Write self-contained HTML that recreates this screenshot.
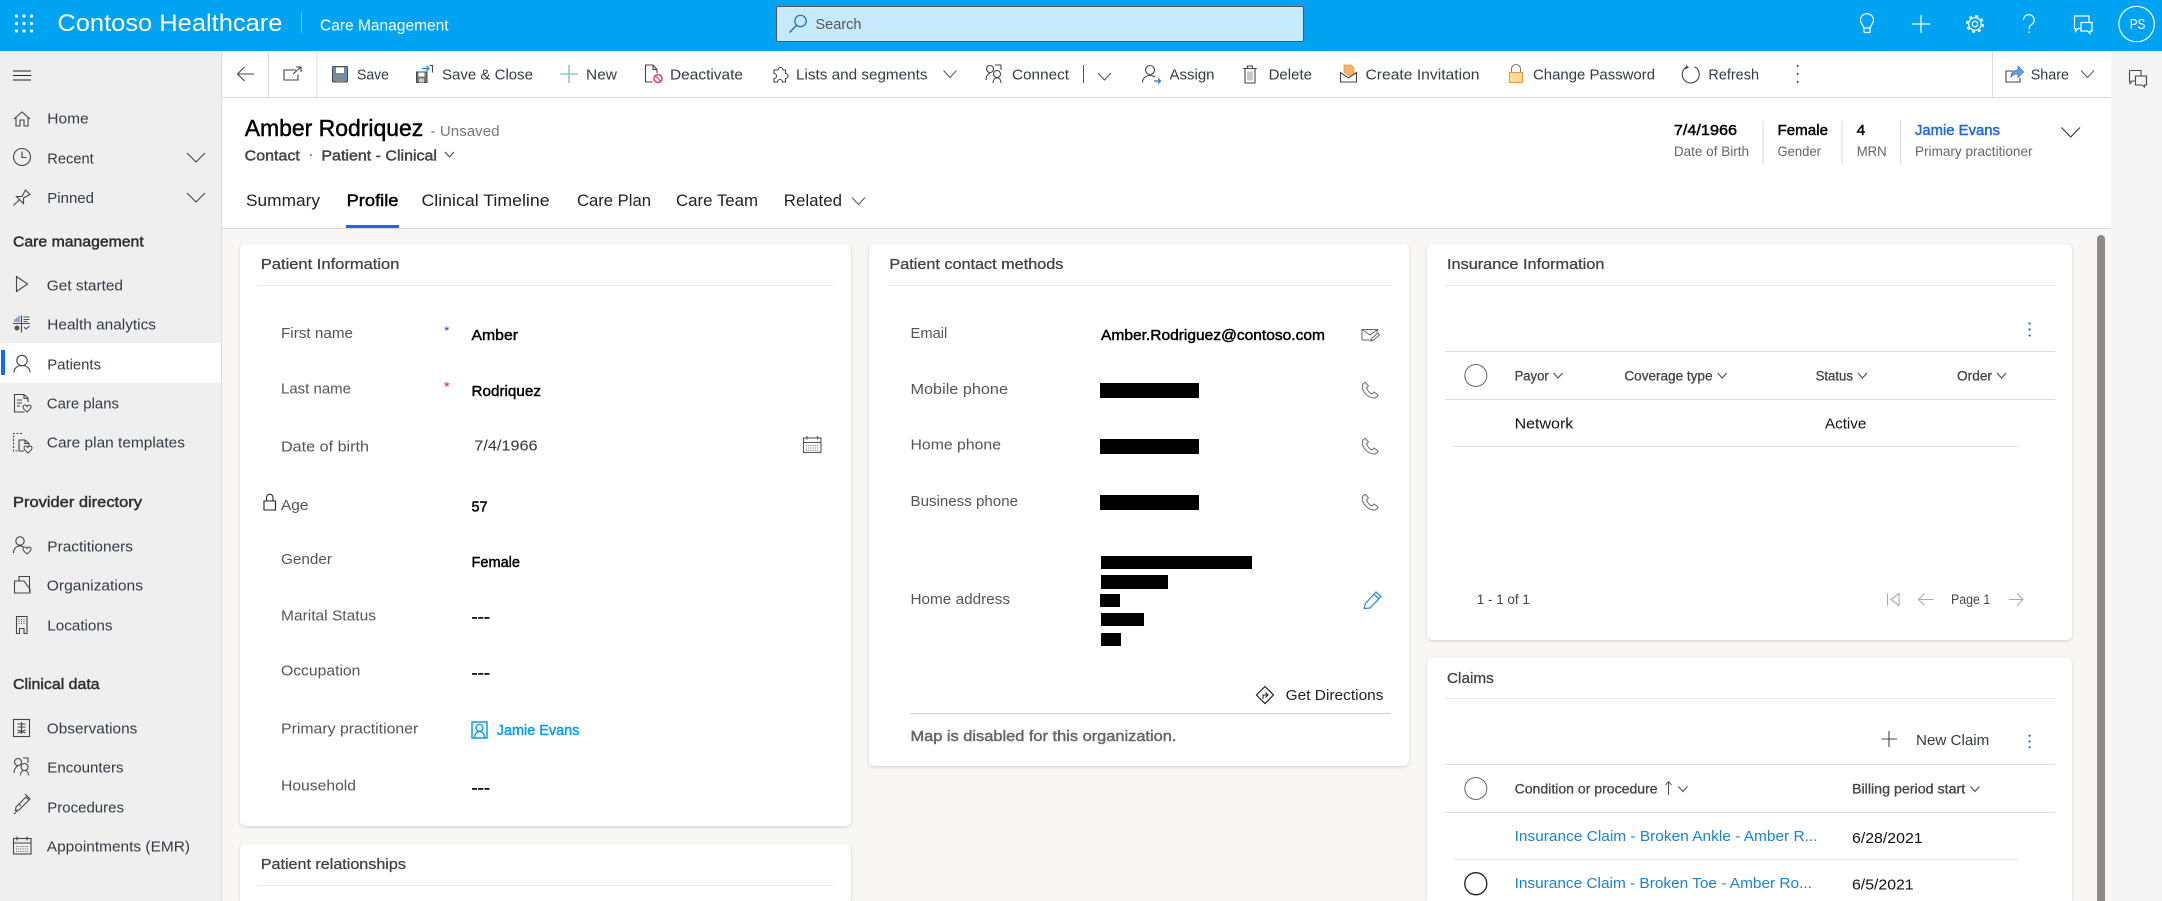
<!DOCTYPE html>
<html lang="en">
<head>
<meta charset="utf-8">
<title>Contoso Healthcare - Care Management</title>
<style>
html,body{margin:0;padding:0;width:2162px;height:901px;overflow:hidden;background:#f8f7f6}
#root{position:relative;width:2162px;height:901px;overflow:hidden;background:#f8f7f6}
.a{position:absolute;box-sizing:border-box}
.card{background:#fff;border-radius:5px;box-shadow:0 1px 3px rgba(0,0,0,.16)}
.open{border-radius:5px 5px 0 0}
svg{position:absolute;left:0;top:0;font-family:"Liberation Sans",sans-serif}
text{fill:currentColor;transform:translateY(-.8px)}
.n{font-size:15px;color:#3a3a3a}
.g{font-size:15px;color:#2e2e2e;stroke:currentColor;stroke-width:.45}
.c{font-size:15px;color:#333b45;transform:translateY(-.4px)}
.l{font-size:15px;color:#555;transform:translateY(-.5px)}
.v{font-size:15px;color:#000;stroke:currentColor;stroke-width:.45}
.t{font-size:17px;color:#222}
.h{font-size:13.5px;color:#444;stroke:currentColor;stroke-width:.3}
.d{font-size:15px;color:#111;transform:translateY(-.4px)}
.z{transform:none}
.i{fill:none;stroke:#444;stroke-width:1.1}
.w{fill:none;stroke:#fff;stroke-width:1.2}
</style>
</head>
<body>
<div id="root">
<div class="a" style="left:0;top:0;width:2162px;height:51px;background:#00a2f2"></div>
<div class="a" style="left:776px;top:6px;width:528px;height:36px;background:#c7e9fc;border:1px solid #555;border-radius:2px"></div>
<div class="a" style="left:0;top:51px;width:222px;height:850px;background:#efefef;border-right:1px solid #dcdcdc"></div>
<div class="a" style="left:0;top:343px;width:221px;height:40px;background:#fff"></div>
<div class="a" style="left:1px;top:350px;width:4px;height:25px;background:#0f6cf0"></div>
<div class="a" style="left:222px;top:51px;width:1889px;height:47px;background:#fff;border-bottom:1px solid #d4d4d4"></div>
<div class="a" style="left:222px;top:98px;width:1889px;height:131px;background:#fff;border-bottom:1px solid #d8d8d8"></div>
<div class="a" style="left:346px;top:225px;width:53px;height:3px;background:#2266e3"></div>
<div class="a" style="left:2111px;top:51px;width:51px;height:850px;background:#f5f5f5"></div>
<div class="a" style="left:2097px;top:235px;width:8px;height:666px;background:#8a8a8a;border-radius:4px 4px 0 0"></div>
<div class="a card" style="left:240px;top:244px;width:611px;height:582px"></div>
<div class="a card open" style="left:240px;top:844px;width:611px;height:57px"></div>
<div class="a card" style="left:869px;top:244px;width:540px;height:522px"></div>
<div class="a card" style="left:1427px;top:244px;width:645px;height:396px"></div>
<div class="a card open" style="left:1427px;top:658px;width:645px;height:243px"></div>

<svg width="2162" height="901" viewBox="0 0 2162 901" xmlns="http://www.w3.org/2000/svg">
<defs>
<path id="chev" d="M0 0l4.500 5 4.500-5" fill="none" stroke="#555" stroke-width="1.200"/>
<path id="chevL" d="M0 0l6.500 7 6.500-7" fill="none" stroke="#555" stroke-width="1"/>
<path id="phone" d="M4 .5C1.500 1 .5 3 1 6c1 5 6 9.500 11 10 2.500.2 4-1 4.500-3l-4-3-2 2c-2-.5-5-4-5.500-6l2-2z" fill="none" stroke="#666" stroke-width="1"/>
<path id="heart" d="M0 1.500C-1-.5-4-.5-4 2c0 2 2.500 3.500 4 5 1.500-1.500 4-3 4-5 0-2.500-3-2.500-4-.5z" fill="#efefef" stroke="#444" stroke-width="1"/>
</defs>

<!-- Top bar -->
<g fill="#fff">
<circle cx="16.500" cy="16" r="1.600"/><circle cx="24" cy="16" r="1.600"/><circle cx="31.500" cy="16" r="1.600"/>
<circle cx="16.500" cy="23.500" r="1.600"/><circle cx="24" cy="23.500" r="1.600"/><circle cx="31.500" cy="23.500" r="1.600"/>
<circle cx="16.500" cy="31" r="1.600"/><circle cx="24" cy="31" r="1.600"/><circle cx="31.500" cy="31" r="1.600"/>
</g>
<g style="color:#fff">
<text x="57.400" y="31.700" font-size="24" textLength="225" lengthAdjust="spacingAndGlyphs">Contoso Healthcare</text>
<text x="320" y="31.500" font-size="15.500" textLength="128.600" lengthAdjust="spacingAndGlyphs">Care Management</text>
<text x="2129.700" y="30" font-size="14.500" textLength="15.600" lengthAdjust="spacingAndGlyphs">PS</text>
</g>
<path d="M301.500 12v21" stroke="#6cc6f5" stroke-width="1"/>
<circle cx="800.500" cy="21" r="5.700" fill="none" stroke="#1a6fb5" stroke-width="1.200"/>
<path d="M796.500 25.500L789.500 32.500" stroke="#1a6fb5" stroke-width="1.400"/>
<text x="815.500" y="30" font-size="15" style="color:#555" textLength="46" lengthAdjust="spacingAndGlyphs">Search</text>
<path class="w" d="M1863.800 28c0-3-3.300-4-3.300-7.800a6.500 6.500 0 0 1 13 0c0 3.800-3.300 4.800-3.300 7.800zM1864 28v3.500a1 1 0 0 0 1 1h4a1 1 0 0 0 1-1V28"/>
<path class="w" d="M1921 15v18M1912 24h18"/>
<circle class="w" cx="1975" cy="24" r="6.300"/><circle class="w" cx="1975" cy="24" r="2.800"/>
<circle cx="1975" cy="24" r="8" fill="none" stroke="#fff" stroke-width="2" stroke-dasharray="3 3.280"/>
<path class="w" d="M2023.500 20a5.300 5.300 0 1 1 8.500 4.200c-2 1.500-3 2.500-3 5"/><circle cx="2029" cy="32.300" r=".9" fill="#fff"/>
<path class="w" d="M2081 28.500h-3l-2.500 3v-3h-1V16h14.500v6.500M2081 22.500h11V31h-2v2.500l-2.500-2.500H2081z"/>
<circle class="w" cx="2136.600" cy="24" r="17.700"/>

<!-- Sidebar -->
<path d="M13 71h18M13 75.500h18M13 80h18" stroke="#222" stroke-width="1.100"/>
<g>
<text class="c" x="47.300" y="124" textLength="41.300" lengthAdjust="spacingAndGlyphs">Home</text>
<text class="c" x="47.300" y="164" textLength="46.400" lengthAdjust="spacingAndGlyphs">Recent</text>
<text class="c" x="47.300" y="203.500" textLength="46.700" lengthAdjust="spacingAndGlyphs">Pinned</text>
<text class="g" x="13" y="247.300" textLength="130.700" lengthAdjust="spacingAndGlyphs">Care management</text>
<text class="c" x="46.800" y="291" textLength="76.200" lengthAdjust="spacingAndGlyphs">Get started</text>
<text class="c" x="47.300" y="330" textLength="108.700" lengthAdjust="spacingAndGlyphs">Health analytics</text>
<text class="c" x="47.300" y="370" textLength="53.700" lengthAdjust="spacingAndGlyphs">Patients</text>
<text class="c" x="46.800" y="409" textLength="72.200" lengthAdjust="spacingAndGlyphs">Care plans</text>
<text class="c" x="46.800" y="448" textLength="138.200" lengthAdjust="spacingAndGlyphs">Care plan templates</text>
<text class="g" x="13" y="508" textLength="129" lengthAdjust="spacingAndGlyphs">Provider directory</text>
<text class="c" x="47.300" y="552" textLength="85.700" lengthAdjust="spacingAndGlyphs">Practitioners</text>
<text class="c" x="46.800" y="591" textLength="96.200" lengthAdjust="spacingAndGlyphs">Organizations</text>
<text class="c" x="47.300" y="631" textLength="65.200" lengthAdjust="spacingAndGlyphs">Locations</text>
<text class="g" x="13" y="690" textLength="86.600" lengthAdjust="spacingAndGlyphs">Clinical data</text>
<text class="c" x="46.800" y="734" textLength="90.500" lengthAdjust="spacingAndGlyphs">Observations</text>
<text class="c" x="47.300" y="773" textLength="76.200" lengthAdjust="spacingAndGlyphs">Encounters</text>
<text class="c" x="47.300" y="813" textLength="76.700" lengthAdjust="spacingAndGlyphs">Procedures</text>
<text class="c" x="46.800" y="852" textLength="143.200" lengthAdjust="spacingAndGlyphs">Appointments (EMR)</text>
</g>
<path class="i" d="M14 119l8-7 8 7M16 117.500V126h4v-6h4v6h4v-8.500"/>
<circle class="i" cx="22" cy="157" r="8.500"/><path class="i" d="M22 151.500v6h4.500"/>
<path d="M187 153l9 9 9-9M187 193l9 9 9-9" fill="none" stroke="#444" stroke-width="1.100"/>
<path class="i" d="M13.500 205.500l6-6M16.500 196.500h5.500l3.500-6.500 4.500 4.500-6.500 3.500v5.500z"/>
<path class="i" d="M16.500 276.500L27.500 284l-11 7.500z"/>
<path class="i" d="M13 323.500h17M21.500 315.500v17"/>
<path d="M15 322v-3M17 322v-4.500M19 322v-6" stroke="#3b6fb5" stroke-width="1.100"/>
<path d="M23.500 317h6M23.500 319.500h6M23.500 321.500h4" stroke="#555" stroke-width=".9"/>
<circle cx="17" cy="328" r="2.500" fill="#555"/>
<path d="M24 327l2 2 3.500-3" fill="none" stroke="#446" stroke-width="1.100"/>
<circle class="i" cx="22" cy="360.500" r="5.200"/><path class="i" d="M14 372.500c0-4.500 3.500-7 8-7s8 2.500 8 7"/>
<path class="i" d="M28 402v-4l-4-3.500h-9.500V412h10M24 394.500v4h4M17 400h5M17 403h5M17 406h3"/>
<use href="#heart" x="27" y="405"/>
<path class="i" stroke-dasharray="2 1.500" d="M22 433.500h-8.500V451H18"/><path class="i" d="M19 451v-11h6l4 3.500v3M25 440v3.500h4M19 451h5"/>
<use href="#heart" x="28" y="446"/>
<circle class="i" cx="20" cy="541" r="4.200"/><path class="i" d="M13.500 553c0-4 2.500-7 6.500-7 1.500 0 2.500.3 3.500 1"/>
<use href="#heart" x="27" y="547"/>
<path class="i" d="M14.500 581H24l6 8v4H14.500zM19 581v-4.500h10.500V592"/>
<path class="i" d="M16.500 616.500h10.500v17h-3v-5h-4.500v5h-3z"/>
<path d="M19 619v6M21.500 619v6M24 619v6" stroke="#555" stroke-width="1" stroke-dasharray="1 1"/>
<rect class="i" x="13.500" y="719.500" width="16" height="17"/>
<path class="i" d="M21.500 722v12M17.500 724h8M17.500 727h8M17.500 730l8 3M25.500 730l-8 3"/>
<circle class="i" cx="18" cy="762" r="3.500"/><path class="i" d="M14 773c0-4 1.500-6 4-7M23 758h5v5"/><circle class="i" cx="24.500" cy="767" r="3.500"/><path class="i" d="M20.500 775.500c0-3 1.500-5 4-5s4 2 4 5"/>
<path class="i" d="M14 814l4-4M16 807l10-10 3 3-10 10-3.500.5zM25 794l5.500 5.500M19 804l2 2"/>
<rect class="i" x="13.500" y="838.500" width="17.500" height="15.500"/><path class="i" d="M13.500 843h17.500M17 836.500v4M27 836.500v4"/>
<path d="M16 846.500h12M16 849h12M16 851.500h12" stroke="#666" stroke-width="1" stroke-dasharray="1 1.200"/>

<!-- Command bar -->
<path d="M268.500 51v46M317 51v46M1992.500 51v46" stroke="#dcdcdc" stroke-width="1"/>
<path class="i" d="M254 74h-16.500M244.500 67l-7 7 7 7"/>
<path class="i" d="M296 70h-12v10h14v-5.500M293 74l8-7M296 67h5v5"/>
<g>
<text class="c" x="357" y="80" textLength="32" lengthAdjust="spacingAndGlyphs">Save</text>
<text class="c" x="442" y="80" textLength="91" lengthAdjust="spacingAndGlyphs">Save &amp; Close</text>
<text class="c" x="586" y="80" textLength="31" lengthAdjust="spacingAndGlyphs">New</text>
<text class="c" x="670" y="80" textLength="73" lengthAdjust="spacingAndGlyphs">Deactivate</text>
<text class="c" x="796" y="80" textLength="131.500" lengthAdjust="spacingAndGlyphs">Lists and segments</text>
<text class="c" x="1012" y="80" textLength="57" lengthAdjust="spacingAndGlyphs">Connect</text>
<text class="c" x="1169.500" y="80" textLength="45" lengthAdjust="spacingAndGlyphs">Assign</text>
<text class="c" x="1268.600" y="80" textLength="43.400" lengthAdjust="spacingAndGlyphs">Delete</text>
<text class="c" x="1365.500" y="80" textLength="114" lengthAdjust="spacingAndGlyphs">Create Invitation</text>
<text class="c" x="1533" y="80" textLength="122" lengthAdjust="spacingAndGlyphs">Change Password</text>
<text class="c" x="1708.400" y="80" textLength="50.600" lengthAdjust="spacingAndGlyphs">Refresh</text>
<text class="c" x="2030.700" y="80" textLength="38.300" lengthAdjust="spacingAndGlyphs">Share</text>
</g>
<rect x="332.500" y="66.500" width="15" height="15.500" rx="1" fill="#6a8fb5" stroke="#444" stroke-width="1"/>
<rect x="335.500" y="67" width="9" height="6.500" fill="#fff" stroke="#555" stroke-width=".6"/><rect x="336" y="76" width="8" height="6" fill="#888"/>
<rect x="416.500" y="72" width="10.500" height="10.500" fill="#777" stroke="#444"/><rect x="418.500" y="72.500" width="6" height="4" fill="#fff"/><rect x="419" y="78.500" width="5" height="4" fill="#ccc"/>
<path d="M422 68.500h7M426.500 66l2.500 2.500-2.500 2.500" fill="none" stroke="#2b88d8" stroke-width="1.300"/><path class="i" d="M429.500 65.500h3v7"/>
<path d="M569 65v18M560 74h18" stroke="#8dd1ab" stroke-width="1.600"/>
<path class="i" d="M657 73v-3.500l-4-4.500h-7.500v17h7M653 65v4.500h4"/>
<circle cx="658" cy="78.500" r="4" fill="#fff" stroke="#e0455f" stroke-width="1.500"/><path d="M655.500 76l5 5" stroke="#e0455f" stroke-width="1.200"/>
<path class="i" d="M776 70h2a2.500 2.500 0 0 1 5 0h2.500v3.500a2.500 2.500 0 0 1 0 5V82h-3a2.500 2.500 0 0 0-5 0H774v-3.500a2.500 2.500 0 0 0 0-5V70z"/>
<use href="#chevL" x="943.500" y="70.500"/>
<circle class="i" cx="990" cy="69" r="3.500"/><path class="i" d="M986 80c0-4 1.500-6 4-7M995 65h6v5"/><circle class="i" cx="997" cy="74" r="3.500"/><path class="i" d="M993 83c0-3 1.500-5 4-5s4 2 4 5"/>
<path d="M1083.500 65v18" stroke="#555" stroke-width="1"/>
<use href="#chevL" x="1098" y="73"/>
<circle class="i" cx="1150" cy="70" r="4.500"/><path class="i" d="M1142.500 82.500c0-4 3-7 7.500-7 2 0 3.500.5 5 1.500"/>
<path d="M1154 81h6.500M1158 78.500l2.500 2.500-2.500 2.500" fill="none" stroke="#2b78c8" stroke-width="1.300"/>
<path class="i" d="M1245 69v14h10V69M1243 68.500h14M1247.500 68.500V66h5v2.500"/><path d="M1248 71.500v9M1250 71.500v9M1252 71.500v9" stroke="#777" stroke-width=".8"/>
<path d="M1344 72v-7h7l3 3v5l-5 3z" fill="#f6b26b" stroke="#e9953f" stroke-width=".8"/>
<path d="M1340.500 72.500v9.500h16v-9.500l-8 5.500z" fill="#fff" stroke="#444" stroke-width="1.100"/>
<path d="M1511.500 72v-3a4.500 4.500 0 0 1 9 0v3" fill="none" stroke="#777" stroke-width="1.100"/>
<rect x="1509.500" y="72.500" width="13" height="10" fill="#fcdc94" stroke="#f0923f" stroke-width="1"/>
<path class="i" d="M1687 66.800a8.500 8.500 0 1 0 7.500 0M1686 65.500l2 2-2.800 1.200"/>
<g fill="#444"><circle cx="1797.700" cy="66" r="1"/><circle cx="1797.700" cy="74" r="1"/><circle cx="1797.700" cy="82" r="1"/></g>
<path class="i" d="M2013 71h-7v11h14v-4"/>
<path d="M2011 77c0-4.500 3-7 7-7v-4l5.500 6-5.500 5.500V74c-3 0-5.500 1-7 3z" fill="#6b9ed6" stroke="#3a78bd" stroke-width=".8"/>
<use href="#chevL" x="2081" y="70.500"/>
<path class="i" stroke="#222" d="M2129.500 70.500h11.500v5M2135.500 76h11v9h-2v2l-2.500-2h-6.500zM2135 81h-3l-2 2.500v-2.500h-.5V70.500"/>

<!-- Header -->
<text class="z" x="244.700" y="136" font-size="23" style="color:#000;stroke:currentColor;stroke-width:.45" textLength="178.600" lengthAdjust="spacingAndGlyphs">Amber Rodriquez</text>
<text class="z" x="430.700" y="136" font-size="15" style="color:#777" textLength="68.800" lengthAdjust="spacingAndGlyphs">- Unsaved</text>
<text class="g z" x="244.700" y="160.700" textLength="55.100" lengthAdjust="spacingAndGlyphs" style="color:#444">Contact</text>
<circle cx="310.800" cy="155" r="1" fill="#666"/>
<text class="g z" x="321.400" y="160.700" textLength="115.600" lengthAdjust="spacingAndGlyphs" style="color:#444">Patient - Clinical</text>
<use href="#chev" x="445" y="152"/>
<text class="t" x="246" y="206.700" textLength="74" lengthAdjust="spacingAndGlyphs">Summary</text>
<text class="t" x="346.600" y="206.700" textLength="51.900" lengthAdjust="spacingAndGlyphs" style="color:#000;stroke:currentColor;stroke-width:.45">Profile</text>
<text class="t" x="421.500" y="206.700" textLength="128.100" lengthAdjust="spacingAndGlyphs">Clinical Timeline</text>
<text class="t" x="577" y="206.700" textLength="74" lengthAdjust="spacingAndGlyphs">Care Plan</text>
<text class="t" x="676" y="206.700" textLength="82" lengthAdjust="spacingAndGlyphs">Care Team</text>
<text class="t" x="783.800" y="206.700" textLength="58.200" lengthAdjust="spacingAndGlyphs">Related</text>
<use href="#chevL" x="852" y="197.500"/>
<g>
<text class="v" x="1673.900" y="136" textLength="63.100" lengthAdjust="spacingAndGlyphs">7/4/1966</text>
<text x="1673.900" y="156.700" font-size="14" style="color:#666" textLength="75.100" lengthAdjust="spacingAndGlyphs">Date of Birth</text>
<text class="v" x="1777.500" y="136" textLength="50.500" lengthAdjust="spacingAndGlyphs">Female</text>
<text x="1777.500" y="156.700" font-size="14" style="color:#666" textLength="43.500" lengthAdjust="spacingAndGlyphs">Gender</text>
<text class="v" x="1856.700" y="136" textLength="8.700" lengthAdjust="spacingAndGlyphs">4</text>
<text x="1856.700" y="156.700" font-size="14" style="color:#666" textLength="29.900" lengthAdjust="spacingAndGlyphs">MRN</text>
<text class="v" x="1915" y="136" textLength="84.900" lengthAdjust="spacingAndGlyphs" style="color:#2266e3">Jamie Evans</text>
<text x="1915" y="156.700" font-size="14" style="color:#666" textLength="117.500" lengthAdjust="spacingAndGlyphs">Primary practitioner</text>
</g>
<path d="M1763 121v43M1842 121v43M1900.500 121v43" stroke="#d8d8d8" stroke-width="1"/>
<path d="M2061.500 127.500l9.250 9.500 9.250-9.500" fill="none" stroke="#333" stroke-width="1.100"/>

<!-- Patient Information -->
<text class="h" x="260.800" y="270" style="font-size:15px" textLength="138.600" lengthAdjust="spacingAndGlyphs">Patient Information</text>
<path d="M258 285.500h575" stroke="#e8e8e8" stroke-width="1"/>
<g>
<text class="l" x="281" y="338.300" textLength="72" lengthAdjust="spacingAndGlyphs">First name</text>
<text x="444" y="335" font-size="11" style="color:#2a2ae0" textLength="5.500" lengthAdjust="spacingAndGlyphs">*</text>
<text class="v" x="471.500" y="340.700" textLength="46.500" lengthAdjust="spacingAndGlyphs">Amber</text>
<text class="l" x="281" y="394" textLength="70" lengthAdjust="spacingAndGlyphs">Last name</text>
<text x="443.500" y="392" font-size="13" style="color:#e8202a" textLength="6.500" lengthAdjust="spacingAndGlyphs">*</text>
<text class="v" x="471.500" y="396.700" textLength="69.500" lengthAdjust="spacingAndGlyphs">Rodriquez</text>
<text class="l" x="281" y="452" textLength="88" lengthAdjust="spacingAndGlyphs">Date of birth</text>
<text class="l" x="474.300" y="451" textLength="63.300" lengthAdjust="spacingAndGlyphs" style="color:#333">7/4/1966</text>
<text class="l" x="281" y="510.700" textLength="27.500" lengthAdjust="spacingAndGlyphs">Age</text>
<text class="v" x="471.500" y="512.300" textLength="16.100" lengthAdjust="spacingAndGlyphs">57</text>
<text class="l" x="281" y="564.700" textLength="51" lengthAdjust="spacingAndGlyphs">Gender</text>
<text class="v" x="471.500" y="568" textLength="48.500" lengthAdjust="spacingAndGlyphs">Female</text>
<text class="l" x="281" y="621" textLength="95" lengthAdjust="spacingAndGlyphs">Marital Status</text>
<text class="v" x="471.500" y="623" textLength="18.500" lengthAdjust="spacingAndGlyphs">---</text>
<text class="l" x="281" y="676" textLength="79.400" lengthAdjust="spacingAndGlyphs">Occupation</text>
<text class="v" x="471.500" y="679" textLength="18.500" lengthAdjust="spacingAndGlyphs">---</text>
<text class="l" x="281" y="734" textLength="137.300" lengthAdjust="spacingAndGlyphs">Primary practitioner</text>
<text class="v" x="496.800" y="736" textLength="82.600" lengthAdjust="spacingAndGlyphs" style="color:#0d9bee">Jamie Evans</text>
<text class="l" x="281" y="791" textLength="75" lengthAdjust="spacingAndGlyphs">Household</text>
<text class="v" x="471.500" y="794" textLength="18.500" lengthAdjust="spacingAndGlyphs">---</text>
</g>
<path class="i" d="M264 510v-9h11.500v9zM266.500 501v-3.500a3.200 3.200 0 0 1 6.500 0V501" style="stroke:#222"/>
<rect x="472" y="722" width="15" height="16" fill="none" stroke="#0d9bee" stroke-width="1.500"/>
<circle cx="479.500" cy="727.800" r="3.500" fill="none" stroke="#0d9bee" stroke-width="1.400"/>
<path d="M474.500 738c0-4 2-6.500 5-6.500s5 2.500 5 6.500" fill="none" stroke="#0d9bee" stroke-width="1.400"/>
<rect x="803.500" y="438" width="17.500" height="14.500" fill="none" stroke="#555" stroke-width="1.100"/><path d="M803.500 442.500h17.500M807 436v3.500M817.500 436v3.500" fill="none" stroke="#555" stroke-width="1.100"/>
<path d="M806 445.500h12.500M806 448h12.500M806 450.500h12.500" stroke="#777" stroke-width="1" stroke-dasharray="1 1.200"/>
<text class="h" x="260.800" y="870" style="font-size:15px" textLength="145.100" lengthAdjust="spacingAndGlyphs">Patient relationships</text>
<path d="M258 885.500h575" stroke="#e8e8e8" stroke-width="1"/>

<!-- Contact methods -->
<text class="h" x="889.400" y="270" style="font-size:15px" textLength="174" lengthAdjust="spacingAndGlyphs">Patient contact methods</text>
<path d="M887.600 285.500h503.200" stroke="#e8e8e8" stroke-width="1"/>
<g>
<text class="l" x="910.500" y="338.300" textLength="36.800" lengthAdjust="spacingAndGlyphs">Email</text>
<text class="v" x="1101" y="340.700" textLength="224" lengthAdjust="spacingAndGlyphs">Amber.Rodriguez@contoso.com</text>
<text class="l" x="910.500" y="394.300" textLength="97.500" lengthAdjust="spacingAndGlyphs">Mobile phone</text>
<text class="l" x="910.500" y="450" textLength="90.500" lengthAdjust="spacingAndGlyphs">Home phone</text>
<text class="l" x="910.500" y="506.300" textLength="107.500" lengthAdjust="spacingAndGlyphs">Business phone</text>
<text class="l" x="910.500" y="604.300" textLength="99.500" lengthAdjust="spacingAndGlyphs">Home address</text>
</g>
<g fill="#000">
<rect x="1100" y="383" width="99" height="15"/><rect x="1100" y="439" width="99" height="15"/><rect x="1100" y="495" width="99" height="15"/>
<rect x="1101" y="556" width="151" height="13"/><rect x="1101" y="575" width="67" height="14"/><rect x="1100" y="594" width="20" height="13"/>
<rect x="1101" y="613" width="43" height="13"/><rect x="1101" y="633" width="20" height="13"/>
</g>
<path d="M1372 340h-10v-10.500h16l-1.500 3M1362 329.500l8 5.500 7.500-5.500M1371 341l1-3 6-5 1.500 2-6 5z" fill="none" stroke="#666" stroke-width="1"/>
<use href="#phone" x="1361.500" y="382"/><use href="#phone" x="1361.500" y="438"/><use href="#phone" x="1361.500" y="494"/>
<path d="M1364 608.500l1.500-5 10.500-11.500 5 4.500-11 11.500z M1373.500 594l5 4.500" fill="none" stroke="#2b88d8" stroke-width="1.200"/>
<path d="M1265 686.500l8.500 8.500-8.500 8.500-8.500-8.500z" fill="none" stroke="#222" stroke-width="1.200"/>
<path d="M1263 699v-4h4.500M1265.500 692.500l2.500 2.500-2.500 2.500" fill="none" stroke="#222" stroke-width="1.100"/>
<text x="1285.600" y="701" font-size="15" style="color:#222" textLength="97.900" lengthAdjust="spacingAndGlyphs">Get Directions</text>
<path d="M910.500 713.500h480.300" stroke="#cfcfcf" stroke-width="1"/>
<text class="v" x="910.500" y="742" textLength="265.900" lengthAdjust="spacingAndGlyphs" style="color:#666">Map is disabled for this organization.</text>

<!-- Insurance -->
<text class="h" x="1447" y="270" style="font-size:15px" textLength="157.400" lengthAdjust="spacingAndGlyphs">Insurance Information</text>
<path d="M1445 285.500h610" stroke="#e8e8e8" stroke-width="1"/>
<g fill="#2266a3"><circle cx="2029.600" cy="323.500" r="1.100"/><circle cx="2029.600" cy="329.500" r="1.100"/><circle cx="2029.600" cy="335.500" r="1.100"/></g>
<path d="M1445 351.500h610M1445 399.500h610" stroke="#dedede" stroke-width="1"/>
<circle cx="1475.800" cy="375.500" r="11" fill="none" stroke="#666" stroke-width="1"/>
<text class="h" x="1514.600" y="381.400" textLength="34.100" lengthAdjust="spacingAndGlyphs">Payor</text>
<text class="h" x="1624.400" y="381.400" textLength="88.100" lengthAdjust="spacingAndGlyphs">Coverage type</text>
<text class="h" x="1815.600" y="381.400" textLength="37.400" lengthAdjust="spacingAndGlyphs">Status</text>
<text class="h" x="1957" y="381.400" textLength="35" lengthAdjust="spacingAndGlyphs">Order</text>
<use href="#chev" x="1553.500" y="373"/><use href="#chev" x="1717.700" y="373"/><use href="#chev" x="1858" y="373"/><use href="#chev" x="1997" y="373"/>
<text class="d" x="1514.600" y="429" textLength="58.700" lengthAdjust="spacingAndGlyphs">Network</text>
<text class="d" x="1825" y="429" textLength="41.300" lengthAdjust="spacingAndGlyphs">Active</text>
<path d="M1453 446.500h565.700" stroke="#e3e3e3" stroke-width="1"/>
<text x="1476.800" y="605" font-size="13.500" style="color:#444" textLength="53" lengthAdjust="spacingAndGlyphs">1 - 1 of 1</text>
<text x="1951" y="605" font-size="13.500" style="color:#444" textLength="39.300" lengthAdjust="spacingAndGlyphs">Page 1</text>
<path d="M1887.500 593.500v12M1899 593.500l-8 6 8 6zM1933.500 599.500h-15M1924.500 593.500l-6 6 6 6M2009 599.500h14M2017 593.500l6 6-6 6" fill="none" stroke="#aaa" stroke-width="1.100"/>

<!-- Claims -->
<text class="h" x="1447" y="684" style="font-size:15px" textLength="46.800" lengthAdjust="spacingAndGlyphs">Claims</text>
<path d="M1445 698.500h610" stroke="#e8e8e8" stroke-width="1"/>
<path d="M1889 731v16M1881.500 739h15.500" stroke="#444" stroke-width="1.100"/>
<text x="1916" y="746" font-size="15" style="color:#333b45" textLength="73.300" lengthAdjust="spacingAndGlyphs">New Claim</text>
<g fill="#2266a3"><circle cx="2029.600" cy="735.700" r="1.100"/><circle cx="2029.600" cy="741.500" r="1.100"/><circle cx="2029.600" cy="747.300" r="1.100"/></g>
<path d="M1445 764.500h610M1445 812.500h610" stroke="#dedede" stroke-width="1"/>
<circle cx="1475.800" cy="788.500" r="11" fill="none" stroke="#666" stroke-width="1"/>
<text class="h" x="1514.600" y="794.400" textLength="143" lengthAdjust="spacingAndGlyphs">Condition or procedure</text>
<path d="M1668.500 795v-13M1665.500 785l3-3.500 3 3.500" fill="none" stroke="#555" stroke-width="1"/>
<use href="#chev" x="1678.400" y="786.500"/>
<text class="h" x="1852" y="794.400" textLength="113.200" lengthAdjust="spacingAndGlyphs">Billing period start</text>
<use href="#chev" x="1970.400" y="786.500"/>
<text x="1514.600" y="842" font-size="15" style="color:#1a82d0" textLength="302.900" lengthAdjust="spacingAndGlyphs">Insurance Claim - Broken Ankle - Amber R...</text>
<text class="d" x="1852" y="843.300" textLength="70.600" lengthAdjust="spacingAndGlyphs">6/28/2021</text>
<path d="M1453 859.500h565.700" stroke="#e3e3e3" stroke-width="1"/>
<circle cx="1475.800" cy="883.700" r="11" fill="none" stroke="#222" stroke-width="1.300"/>
<text x="1514.600" y="889" font-size="15" style="color:#1a82d0" textLength="297.300" lengthAdjust="spacingAndGlyphs">Insurance Claim - Broken Toe - Amber Ro...</text>
<text class="d" x="1852" y="890" textLength="61.600" lengthAdjust="spacingAndGlyphs">6/5/2021</text>
</svg>
</div>
</body>
</html>
